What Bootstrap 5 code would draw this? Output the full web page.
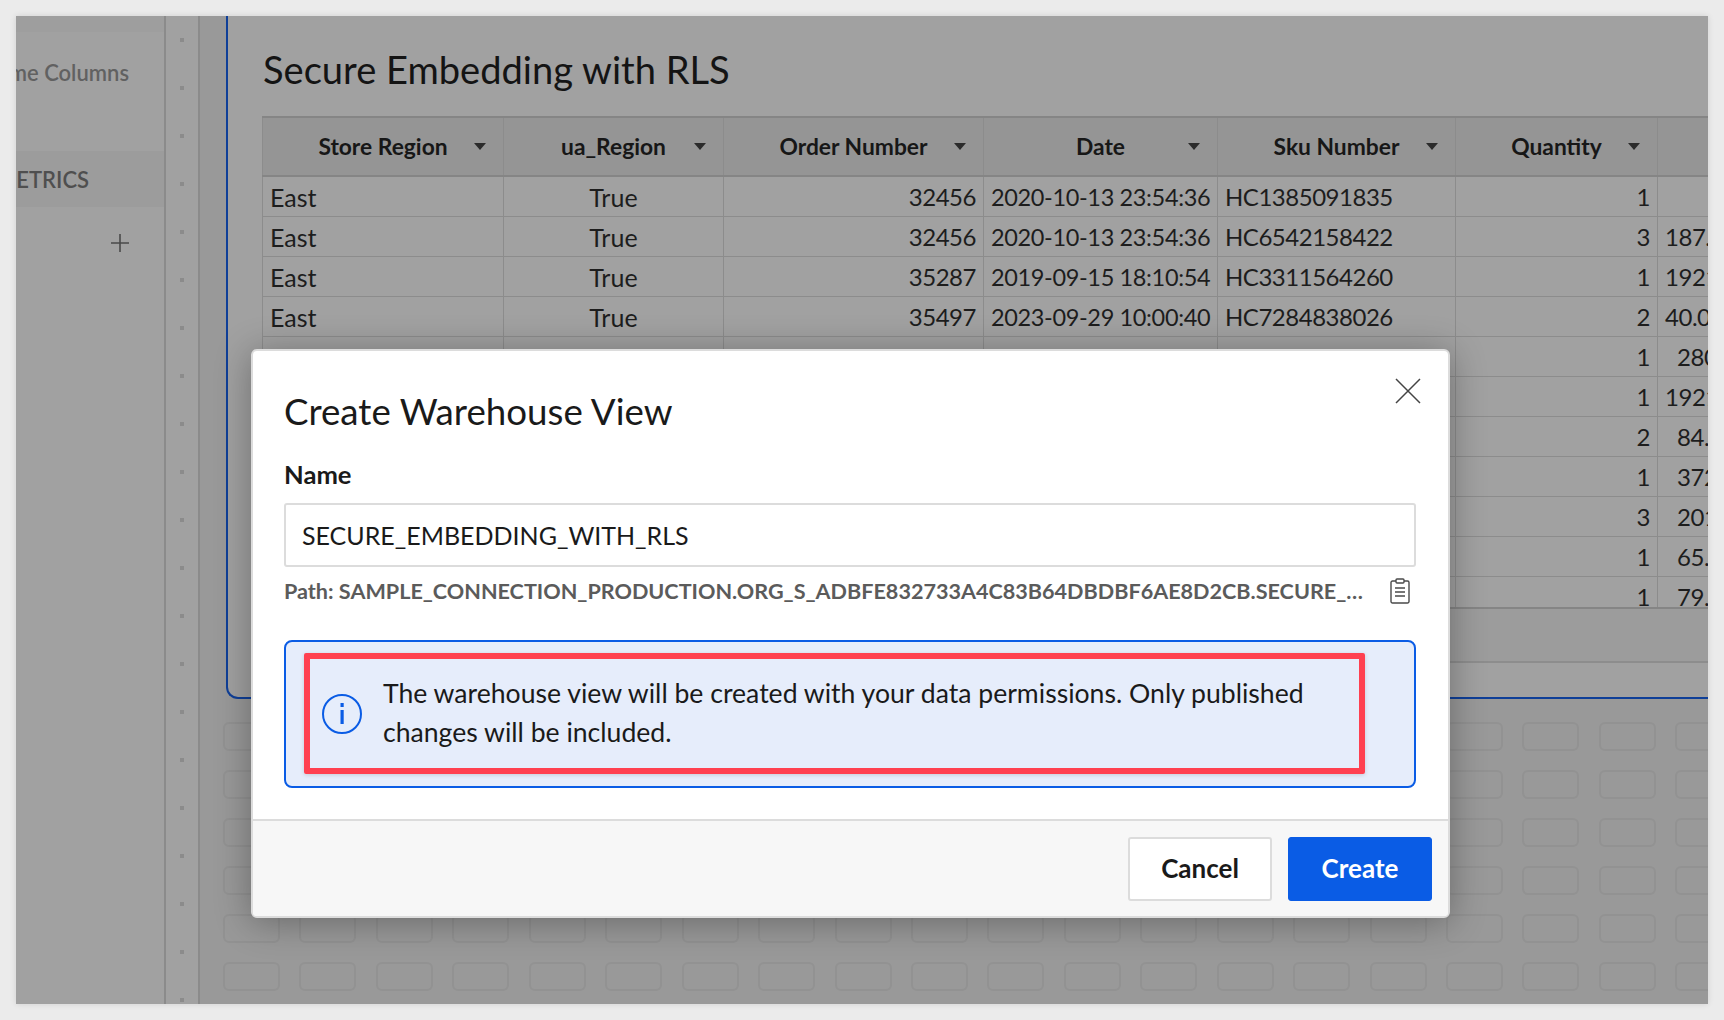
<!DOCTYPE html>
<html>
  <head>
    <meta charset="UTF-8" />
    <title>Create Warehouse View</title>
    <link href="https://cdn.jsdelivr.net/npm/bootstrap@5.3.0/dist/css/bootstrap.min.css" rel="stylesheet" />
    <style>
      body {
        background: #ebebeb;
        font-family: "Lato", "Liberation Sans", sans-serif;
        width: 1724px;
        height: 1020px;
        padding: 16px;
        overflow: hidden;
      }
      .frame {
        width: 1692px;
        height: 988px;
        overflow: hidden;
        background: #999;
        box-shadow: 0 0 6px rgba(0, 0, 0, 0.12);
      }
      /* left panel */
      .side-panel {
        width: 148px;
        background: #a1a1a1;
        overflow: hidden;
      }
      .side-top {
        height: 16px;
        background: #9e9e9e;
      }
      .side-item {
        height: 98px;
        padding-top: 24px;
        padding-right: 35px;
        margin-bottom: 21px;
        font-size: 22px;
        font-weight: 600;
        color: #616161;
        white-space: nowrap;
      }
      .side-metrics {
        height: 56px;
        background: #9c9c9c;
        padding-right: 75px;
        margin-bottom: 26px;
        font-size: 22px;
        font-weight: 600;
        color: #4f4f4f;
        white-space: nowrap;
      }
      .side-plus {
        padding-right: 34px;
      }
      .rail {
        width: 36px;
        background-color: #a1a1a1;
        background-image: radial-gradient(circle 2.5px, #8b8b8b 100%, transparent 100%);
        background-size: 100% 48px;
        border-left: 2px solid #8b8b8b;
        border-right: 2px solid #8b8b8b;
      }
      /* canvas */
      .canvas {
        padding-left: 23px;
        min-width: 0;
      }
      .blue-box {
        width: 1600px;
        height: 683px;
        margin-left: 3px;
        padding-top: 31px;
        background: #a1a1a1;
        border-left: 2px solid #0f3f98;
        border-bottom: 2px solid #0f3f98;
        border-bottom-left-radius: 12px;
      }
      .box-title {
        margin: 0 0 24px 35px;
        font-size: 38.1px;
        line-height: 45px;
        font-weight: 400;
        color: #141414;
      }
      .table-clip {
        height: 493px;
        margin-left: 34px;
        overflow: hidden;
        border-top: 2px solid #858585;
        border-bottom: 2px solid #858585;
      }
      .data-grid {
        table-layout: fixed;
        width: 1483px;
        border-collapse: collapse;
        font-size: 24px;
        line-height: 34px;
        color: #1d1d1d;
      }
      .data-grid th,
      .data-grid td {
        border: 1px solid #8c8c8c;
        padding: 0 7px;
        white-space: nowrap;
        overflow: hidden;
      }
      .data-grid th {
        height: 58px;
        padding-bottom: 2px;
        background: #959595;
        border-top: 0;
        border-bottom: 2px solid #858585;
        font-weight: 700;
        font-size: 22.8px;
        text-align: center;
        color: #171717;
        position: relative;
      }
      .data-grid td {
        height: 40px;
        padding-top: 2px;
        background: #a1a1a1;
      }
      .data-grid td.cell-text {
        font-size: 25px;
      }
      .data-grid td.cell-num {
        letter-spacing: -0.48px;
      }
      .data-grid td.cell-date {
        font-size: 23.5px;
        letter-spacing: -0.36px;
      }
      .data-grid td.cell-price {
        padding-right: 9px;
      }
      .cw1 { width: 241px; }
      .cw2 { width: 220px; }
      .cw3 { width: 260px; }
      .cw4 { width: 234px; }
      .cw5 { width: 238px; }
      .cw6 { width: 202px; }
      .cw7 { width: 88px; }
      .sort-caret {
        position: absolute;
        right: 17px;
        top: 25px;
        width: 0;
        height: 0;
        border-left: 6.5px solid transparent;
        border-right: 6.5px solid transparent;
        border-top: 7px solid #2b2b2b;
      }
      .box-foot {
        height: 54px;
        margin-left: 34px;
        background: #9c9c9c;
        border-bottom: 2px solid #8d8d8d;
      }
      /* empty layout cells */
      .cell-grid {
        margin-top: 23px;
        row-gap: 19px;
        column-gap: 19.45px;
        width: 1600px;
      }
      .slot {
        width: 57px;
        height: 29px;
        border: 2px solid #929292;
        border-radius: 6px;
      }
      /* dialog */
      .dialog {
        position: absolute;
        left: 251px;
        top: 349px;
        width: 1199px;
        height: 569px;
        background: #fff;
        border: 2px solid #dcdcdc;
        border-radius: 6px;
        box-shadow: 0 4px 36px rgba(0, 0, 0, 0.32);
        color: #1a1a1a;
        overflow: hidden;
      }
      .dialog-head {
        padding: 37px 27px 0 31px;
        height: 105px;
      }
      .dialog-title {
        margin: 0;
        font-size: 36.7px;
        line-height: 46px;
        font-weight: 400;
      }
      .close-x {
        width: 26px;
        height: 26px;
        margin-top: -10px;
        border: 0;
        background: none;
        padding: 0;
        line-height: 0;
      }
      .dialog-body {
        padding: 0 32px 0 31px;
      }
      .field-label {
        margin-bottom: 11px;
        font-size: 25.6px;
        line-height: 36px;
        font-weight: 700;
      }
      .name-input {
        height: 64px;
        padding: 0 16px;
        font-size: 25px;
        color: #1a1a1a;
        border: 2px solid #dcdcdc;
        border-radius: 3px;
      }
      .path-row {
        height: 48px;
        font-size: 21.6px;
        font-weight: 700;
        color: #5b5b5b;
      }
      .path-text {
        width: 1084px;
      }
      .clip-icon {
        margin-left: 22px;
      }
      .note {
        position: relative;
        height: 148px;
        margin: 25px 0 0;
        padding: 0 0 0 36px;
        background: #e6edfb;
        border: 2px solid #0a5ce5;
        border-radius: 8px;
        font-size: 26.6px;
        line-height: 39px;
        color: #1a1a1a;
      }
      .note-text {
        padding-left: 21px;
        padding-bottom: 3px;
        width: 960px;
      }
      .red-mark {
        position: absolute;
        left: 18px;
        top: 11px;
        width: 1061px;
        height: 121px;
        border: 6px solid #ff4050;
        border-radius: 2px;
        box-shadow: 0 1px 4px rgba(0, 0, 0, 0.15);
      }
      .dialog-foot {
        height: 97px;
        padding: 0 16px 0 0;
        background: #f7f7f7;
        border-top: 2px solid #dcdcdc;
      }
      .btn-cancel,
      .btn-create {
        width: 144px;
        height: 64px;
        padding: 0;
        font-size: 26px;
        font-weight: 700;
        border-radius: 3px;
      }
      .btn-cancel {
        background: #fff;
        color: #1a1a1a;
        border: 2px solid #dcdcdc;
      }
      .btn-create {
        background: #0a5ce5;
        border-color: #0a5ce5;
      }
    </style>
  </head>
  <body>
    <div class="frame d-flex">
      <div class="side-panel flex-shrink-0">
        <div class="side-top"></div>
        <div class="side-item d-flex justify-content-end">Name Columns</div>
        <div class="side-metrics d-flex justify-content-end align-items-center">METRICS</div>
        <div class="side-plus d-flex justify-content-end">
          <svg width="20" height="20" viewBox="0 0 20 20"><path d="M10 1v18M1 10h18" stroke="#4a4a4a" stroke-width="1.6" fill="none" /></svg>
        </div>
      </div>
      <div class="rail flex-shrink-0"></div>
      <div class="canvas flex-grow-1">
        <div class="blue-box">
          <h2 class="box-title">Secure Embedding with RLS</h2>
          <div class="table-clip">
            <table class="data-grid">
              <thead>
                <tr>
                  <th class="cw1">Store Region<i class="sort-caret"></i></th>
                  <th class="cw2">ua_Region<i class="sort-caret"></i></th>
                  <th class="cw3">Order Number<i class="sort-caret"></i></th>
                  <th class="cw4">Date<i class="sort-caret"></i></th>
                  <th class="cw5">Sku Number<i class="sort-caret"></i></th>
                  <th class="cw6">Quantity<i class="sort-caret"></i></th>
                  <th class="cw7"></th>
                </tr>
              </thead>
              <tbody id="rows"></tbody>
            </table>
          </div>
          <div class="box-foot"></div>
        </div>
        <div class="cell-grid d-flex flex-wrap" id="slots"></div>
      </div>
    </div>

    <div class="dialog modal-content d-flex flex-column">
      <div class="dialog-head d-flex justify-content-between align-items-start">
        <h1 class="dialog-title">Create Warehouse View</h1>
        <button class="close-x" type="button" aria-label="Close">
          <svg width="26" height="26" viewBox="0 0 26 26"><path d="M1 1l24 24M25 1L1 25" stroke="#444" stroke-width="1.5" fill="none" /></svg>
        </button>
      </div>
      <div class="dialog-body">
        <div class="field-label">Name</div>
        <input class="form-control name-input" type="text" value="SECURE_EMBEDDING_WITH_RLS" />
        <div class="path-row d-flex align-items-center">
          <div class="path-text text-truncate">Path: SAMPLE_CONNECTION_PRODUCTION.ORG_S_ADBFE832733A4C83B64DBDBF6AE8D2CB.SECURE_EMBEDDING_WITH_RLS</div>
          <svg class="clip-icon" width="20" height="26" viewBox="0 0 20 26" fill="none" stroke="#4a4a4a" stroke-width="1.4">
            <path d="M6 3H2.500A1.500 1.500 0 0 0 1 4.500V23.500A1.500 1.500 0 0 0 2.500 25H17.500A1.500 1.500 0 0 0 19 23.500V4.500A1.500 1.500 0 0 0 17.500 3H14" />
            <rect x="6" y="1" width="8" height="4" rx="1" />
            <path d="M5 10h10M5 14h10M5 18h10" />
          </svg>
        </div>
        <div class="note alert d-flex align-items-center">
          <svg class="flex-shrink-0" width="40" height="40" viewBox="0 0 40 40" fill="none">
            <circle cx="20" cy="20" r="19" stroke="#0a5ce5" stroke-width="2" />
            <rect x="18.500" y="9" width="3.200" height="4" fill="#0a5ce5" />
            <rect x="18.500" y="16" width="3.200" height="14" fill="#0a5ce5" />
          </svg>
          <div class="note-text">The warehouse view will be created with your data permissions. Only published changes will be included.</div>
          <div class="red-mark"></div>
        </div>
      </div>
      <div class="dialog-foot mt-auto d-flex justify-content-end align-items-center gap-3">
        <button class="btn btn-cancel" type="button">Cancel</button>
        <button class="btn btn-primary btn-create" type="button">Create</button>
      </div>
    </div>

    <script>
      const rowData = [
        ["East", "True", "32456", "2020-10-13 23:54:36", "HC1385091835", "1", ""],
        ["East", "True", "32456", "2020-10-13 23:54:36", "HC6542158422", "3", "187.50"],
        ["East", "True", "35287", "2019-09-15 18:10:54", "HC3311564260", "1", "1921.5"],
        ["East", "True", "35497", "2023-09-29 10:00:40", "HC7284838026", "2", "40.000"],
        ["East", "True", "35497", "2023-09-29 10:00:40", "HC2750143968", "1", "280.5"],
        ["East", "True", "36120", "2021-03-18 14:22:07", "HC9017342651", "1", "1921.5"],
        ["East", "True", "36120", "2021-03-18 14:22:07", "HC4468201935", "2", "84.50"],
        ["East", "True", "37044", "2022-06-02 09:41:33", "HC5823176094", "1", "372.5"],
        ["East", "True", "37044", "2022-06-02 09:41:33", "HC1196420587", "3", "201.5"],
        ["East", "True", "38215", "2020-12-27 19:05:12", "HC6634908712", "1", "65.50"],
        ["East", "True", "38215", "2020-12-27 19:05:12", "HC3087515246", "1", "79.50"],
      ];
      document.querySelector("#rows").innerHTML = rowData
        .map(
          (r) => `<tr>
            <td class="cell-text">${r[0]}</td>
            <td class="cell-text text-center">${r[1]}</td>
            <td class="cell-num text-end">${r[2]}</td>
            <td class="cell-date">${r[3]}</td>
            <td class="cell-num">${r[4]}</td>
            <td class="cell-num text-end">${r[5]}</td>
            <td class="cell-num cell-price text-end">${r[6]}</td>
          </tr>`
        )
        .join("");

      // 6 rows of empty layout cells under the box
      document.querySelector("#slots").innerHTML = '<div class="slot"></div>'.repeat(126);
    </script>
    <script src="https://cdn.jsdelivr.net/npm/bootstrap@5.3.0/dist/js/bootstrap.bundle.min.js"></script>
  </body>
</html>
